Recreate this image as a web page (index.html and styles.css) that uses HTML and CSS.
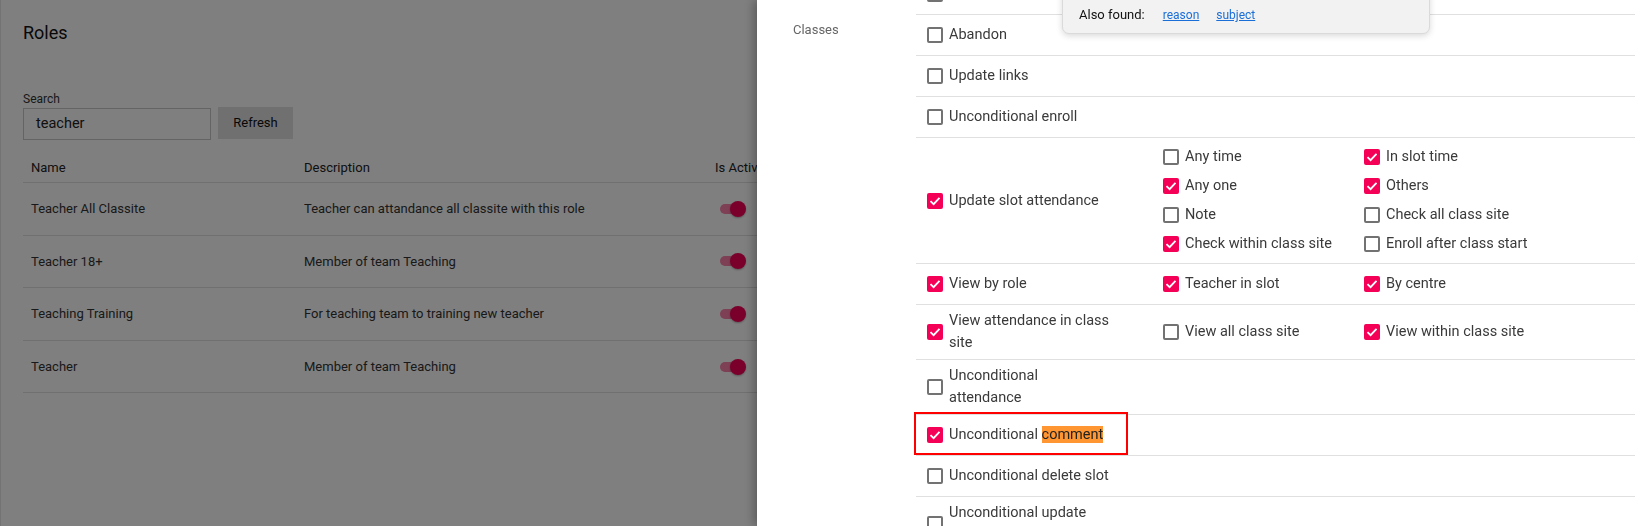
FILE: index.html
```html
<!DOCTYPE html>
<html>
<head>
<meta charset="utf-8">
<title>Roles</title>
<link rel="stylesheet" href="styles.css">
</head>
<body>
<div class="page">
  <h1 class="title">Roles</h1>
  <div class="search">
    <span class="search-label">Search</span>
    <div class="search-row">
      <div class="input">teacher</div>
      <div class="btn">Refresh</div>
    </div>
  </div>
  <div class="table">
    <div class="tr thead">
      <div class="td">Name</div>
      <div class="td">Description</div>
      <div class="td">Is Active</div>
    </div>
    <div class="tr">
      <div class="td">Teacher All Classite</div>
      <div class="td">Teacher can attandance all classite with this role</div>
      <div class="td"><span class="toggle"><span class="knob"></span></span></div>
    </div>
    <div class="tr">
      <div class="td">Teacher 18+</div>
      <div class="td">Member of team Teaching</div>
      <div class="td"><span class="toggle"><span class="knob"></span></span></div>
    </div>
    <div class="tr">
      <div class="td">Teaching Training</div>
      <div class="td">For teaching team to training new teacher</div>
      <div class="td"><span class="toggle"><span class="knob"></span></span></div>
    </div>
    <div class="tr">
      <div class="td">Teacher</div>
      <div class="td">Member of team Teaching</div>
      <div class="td"><span class="toggle"><span class="knob"></span></span></div>
    </div>
  </div>
</div>

<div class="backdrop"></div>

<aside class="drawer">
  <div class="drawer-scroll">
    <section class="section">
      <div class="sec-label"></div>
      <div class="rows">
        <div class="prow">
          <div class="cell"><label class="cb-item"><span class="cb"></span></label></div>
        </div>
      </div>
    </section>
    <section class="section">
      <div class="sec-label">Classes</div>
      <div class="rows">
        <div class="prow">
          <div class="cell"><label class="cb-item"><span class="cb"></span><span class="lbl">Abandon</span></label></div>
        </div>
        <div class="prow">
          <div class="cell"><label class="cb-item"><span class="cb"></span><span class="lbl">Update links</span></label></div>
        </div>
        <div class="prow">
          <div class="cell"><label class="cb-item"><span class="cb"></span><span class="lbl">Unconditional enroll</span></label></div>
        </div>
        <div class="prow">
          <div class="cell"><label class="cb-item"><span class="cb on"><svg viewBox="0 0 16 16"><polyline points="3.5,8.2 6.6,11.2 12.5,4.8"/></svg></span><span class="lbl">Update slot attendance</span></label></div>
          <div class="cell">
            <div class="sublist">
              <label class="cb-item sub"><span class="cb"></span><span class="lbl">Any time</span></label>
              <label class="cb-item sub"><span class="cb on"><svg viewBox="0 0 16 16"><polyline points="3.5,8.2 6.6,11.2 12.5,4.8"/></svg></span><span class="lbl">Any one</span></label>
              <label class="cb-item sub"><span class="cb"></span><span class="lbl">Note</span></label>
              <label class="cb-item sub"><span class="cb on"><svg viewBox="0 0 16 16"><polyline points="3.5,8.2 6.6,11.2 12.5,4.8"/></svg></span><span class="lbl">Check within class site</span></label>
            </div>
          </div>
          <div class="cell">
            <div class="sublist">
              <label class="cb-item sub"><span class="cb on"><svg viewBox="0 0 16 16"><polyline points="3.5,8.2 6.6,11.2 12.5,4.8"/></svg></span><span class="lbl">In slot time</span></label>
              <label class="cb-item sub"><span class="cb on"><svg viewBox="0 0 16 16"><polyline points="3.5,8.2 6.6,11.2 12.5,4.8"/></svg></span><span class="lbl">Others</span></label>
              <label class="cb-item sub"><span class="cb"></span><span class="lbl">Check all class site</span></label>
              <label class="cb-item sub"><span class="cb"></span><span class="lbl">Enroll after class start</span></label>
            </div>
          </div>
        </div>
        <div class="prow">
          <div class="cell"><label class="cb-item"><span class="cb on"><svg viewBox="0 0 16 16"><polyline points="3.5,8.2 6.6,11.2 12.5,4.8"/></svg></span><span class="lbl">View by role</span></label></div>
          <div class="cell"><label class="cb-item"><span class="cb on"><svg viewBox="0 0 16 16"><polyline points="3.5,8.2 6.6,11.2 12.5,4.8"/></svg></span><span class="lbl">Teacher in slot</span></label></div>
          <div class="cell"><label class="cb-item"><span class="cb on"><svg viewBox="0 0 16 16"><polyline points="3.5,8.2 6.6,11.2 12.5,4.8"/></svg></span><span class="lbl">By centre</span></label></div>
        </div>
        <div class="prow">
          <div class="cell"><label class="cb-item"><span class="cb on"><svg viewBox="0 0 16 16"><polyline points="3.5,8.2 6.6,11.2 12.5,4.8"/></svg></span><span class="lbl">View attendance in class site</span></label></div>
          <div class="cell"><label class="cb-item"><span class="cb"></span><span class="lbl">View all class site</span></label></div>
          <div class="cell"><label class="cb-item"><span class="cb on"><svg viewBox="0 0 16 16"><polyline points="3.5,8.2 6.6,11.2 12.5,4.8"/></svg></span><span class="lbl">View within class site</span></label></div>
        </div>
        <div class="prow">
          <div class="cell"><label class="cb-item"><span class="cb"></span><span class="lbl">Unconditional attendance</span></label></div>
        </div>
        <div class="prow">
          <div class="cell"><label class="cb-item"><span class="cb on"><svg viewBox="0 0 16 16"><polyline points="3.5,8.2 6.6,11.2 12.5,4.8"/></svg></span><span class="lbl">Unconditional <mark class="hit">comment</mark></span></label></div>
          <div class="annot"></div>
        </div>
        <div class="prow">
          <div class="cell"><label class="cb-item"><span class="cb"></span><span class="lbl">Unconditional delete slot</span></label></div>
        </div>
        <div class="prow">
          <div class="cell"><label class="cb-item"><span class="cb"></span><span class="lbl">Unconditional update slot</span></label></div>
        </div>
      </div>
    </section>
  </div>
  <div class="find-popup">
    <span class="also">Also found:</span>
    <a class="found-link" href="#">reason</a>
    <a class="found-link" href="#">subject</a>
  </div>
</aside>
</body>
</html>
```
FILE: styles.css
```css
* { box-sizing: border-box; }

html, body {
  margin: 0;
  height: 526px;
  overflow: hidden;
}

body {
  background: #fff;
  color: #333;
  font-family: Roboto, "Noto Sans", Arial, sans-serif;
}

.page {
  height: 526px;
  padding-left: 22px;
  border-left: 1px solid #e6e6e6;
}

.title {
  margin: 0;
  padding-top: 22px;
  font-size: 18px;
  line-height: 22px;
  font-weight: 400;
  color: #111;
}

.search {
  margin-top: 48px;
}

.search-label {
  display: block;
  font-size: 12px;
  line-height: 14px;
  color: #333;
}

.search-row {
  display: flex;
  align-items: flex-start;
  gap: 7px;
  margin-top: 2px;
}

.input {
  width: 188px;
  height: 32px;
  border: 1px solid #c8c8c8;
  padding: 0 12px;
  font-size: 14.5px;
  line-height: 30px;
  color: #222;
}

.btn {
  width: 75px;
  height: 32px;
  margin-top: -1px;
  background: #e0e0e0;
  font-size: 13px;
  font-weight: 400;
  line-height: 31px;
  text-align: center;
  color: #111;
}

.table {
  margin-top: 13px;
  width: 1100px;
}

.tr {
  display: grid;
  grid-template-columns: 273px 411px 1fr;
  align-items: center;
  height: 52.6px;
  border-bottom: 1px solid #e0e0e0;
  font-size: 13px;
  color: #333;
}

.tr.thead {
  height: 30px;
  color: #222;
}

.td {
  padding-left: 8px;
  white-space: nowrap;
}

.toggle {
  position: relative;
  display: block;
  margin-left: 5px;
  width: 24px;
  height: 10px;
  border-radius: 5px;
  background: #fb80ab;
}

.knob {
  position: absolute;
  left: 10px;
  top: -3px;
  width: 16px;
  height: 16px;
  border-radius: 50%;
  background: #f50057;
  box-shadow: 0 1px 2px rgba(0, 0, 0, 0.3);
}

.backdrop {
  position: fixed;
  inset: 0;
  background: rgba(0, 0, 0, 0.5);
}

.drawer {
  position: fixed;
  top: 0;
  bottom: 0;
  left: 757px;
  right: 0;
  background: #fff;
  box-shadow: -3px 0 10px rgba(0, 0, 0, 0.3);
  overflow: hidden;
}

.drawer-scroll {
  margin-top: -26px;
  padding-right: 17px;
}

.section {
  display: grid;
  grid-template-columns: 159px 1fr;
}

.sec-label {
  padding-left: 36px;
  padding-top: 7px;
  font-size: 13px;
  line-height: 16px;
  color: #666;
}

.prow {
  position: relative;
  display: grid;
  grid-template-columns: 236px 201px 1fr;
  border-bottom: 1px solid #e0e0e0;
}

.cell {
  display: flex;
  align-items: center;
  min-height: 40px;
  padding-left: 11px;
}

.cb-item {
  display: flex;
  align-items: center;
  gap: 6px;
}

.cb {
  flex: none;
  width: 16px;
  height: 16px;
  border: 2px solid #727272;
  border-radius: 2px;
}

.cb.on {
  border: none;
  background: #f50057;
}

.cb svg {
  display: block;
  width: 16px;
  height: 16px;
  fill: none;
  stroke: #fff;
  stroke-width: 1.8;
}

.lbl {
  max-width: 163px;
  padding: 5px 0;
  font-size: 14.5px;
  line-height: 22px;
  color: #3a3a3a;
}

.sublist {
  display: flex;
  flex-direction: column;
  padding: 5px 0;
}

.cb-item.sub {
  height: 28.75px;
}

.cb-item.sub .lbl {
  max-width: none;
  padding: 0;
  white-space: nowrap;
}

.hit {
  background: #ff9632;
  color: #222;
}

.annot {
  position: absolute;
  left: -2px;
  top: -3px;
  width: 214px;
  height: 43px;
  border: 2px solid #ff0000;
  pointer-events: none;
}

.find-popup {
  position: absolute;
  left: 305px;
  top: -10px;
  width: 368px;
  height: 44px;
  display: flex;
  align-items: flex-end;
  padding: 0 0 10px 16px;
  background: #f2f2f2;
  border: 1px solid #dadada;
  border-radius: 0 0 7px 7px;
  box-shadow: 0 2px 6px rgba(0, 0, 0, 0.15);
}

.also {
  font-size: 13px;
  font-weight: 400;
  line-height: 16px;
  color: #111;
  margin-right: 18px;
}

.found-link {
  font-size: 12px;
  line-height: 16px;
  color: #1a6ed8;
  text-decoration: underline;
  margin-right: 17px;
}
```
